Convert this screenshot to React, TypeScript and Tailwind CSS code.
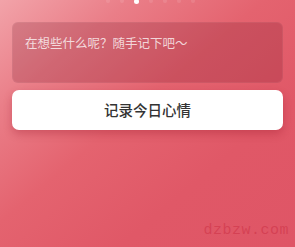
import React from "react";

const DOTS = [0, 1, 2, 3, 4, 5, 6];

export default function App() {
  return (
    <div
      className="relative flex h-[247px] w-[295px] flex-col overflow-hidden bg-[linear-gradient(140deg,#f2a3a9_0%,#ea7e88_22%,#e4636f_45%,#e05867_70%,#df5566_100%)] px-3"
      style={{ fontFamily: '"Noto Sans CJK SC", "Noto Sans", sans-serif' }}
    >
      {/* pager dots, cut by the top edge */}
      <div className="absolute left-[106px] top-[-1px] flex gap-[10px]">
        {DOTS.map((i) => (
          <span
            key={i}
            className={
              i === 2
                ? "size-[5px] rounded-full bg-white"
                : "size-[4px] rounded-full bg-white/10"
            }
          />
        ))}
      </div>

      <div className="mt-[22px] h-[61px] rounded-[6px] bg-[#6a0a1c]/20 px-[13px] pt-[12px] ring-1 ring-inset ring-white/5">
        <p className="text-[12.5px] leading-[18px] text-white/75">
          在想些什么呢？随手记下吧～
        </p>
      </div>

      <button className="mt-[7px] flex h-[40px] items-center justify-center rounded-[7px] bg-white text-[14.5px] font-medium text-[#333] shadow-[0_4px_8px_rgba(150,20,40,0.3)]">
        记录今日心情
      </button>

      <span
        className="absolute bottom-[5px] right-[6px] text-[15px] tracking-[0.5px] text-[#c8283d]/45"
        style={{ fontFamily: '"Liberation Mono", monospace' }}
      >
        dzbzw.com
      </span>
    </div>
  );
}
